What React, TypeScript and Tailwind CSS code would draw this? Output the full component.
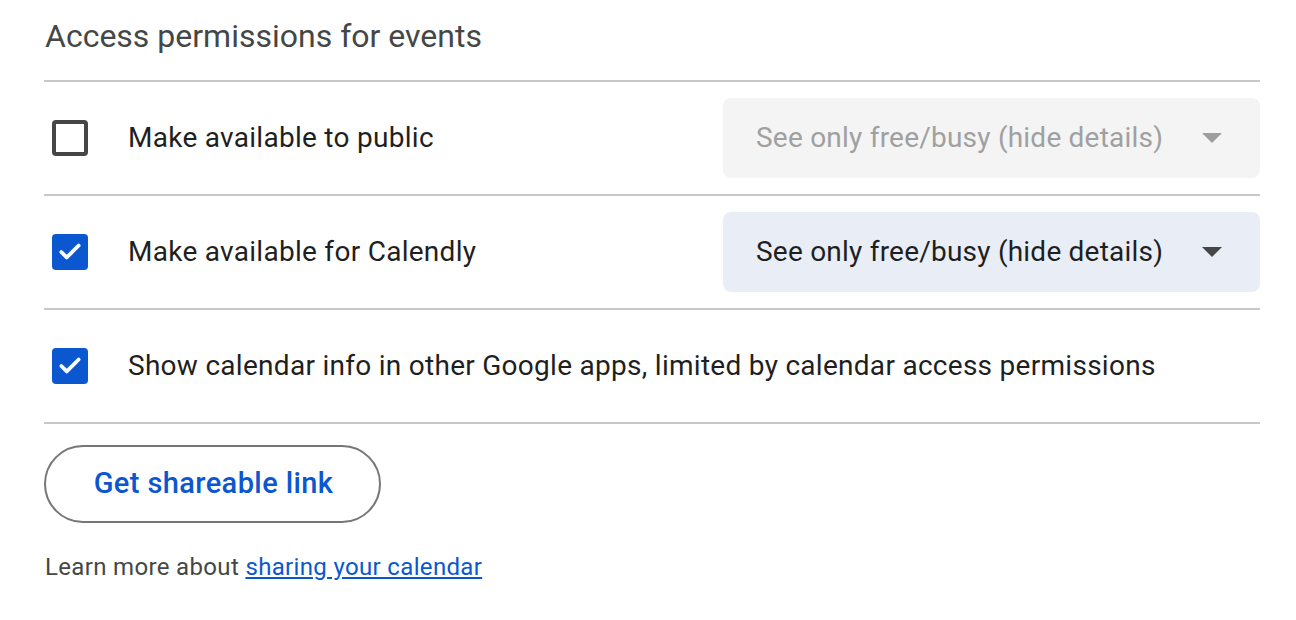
import { Check } from "lucide-react";

function Checkbox({ checked }: { checked: boolean }) {
  return checked ? (
    <div className="flex h-[36px] w-[36px] shrink-0 items-center justify-center rounded-[4px] bg-[#0b57d0]">
      <Check className="h-[26px] w-[26px] text-white" strokeWidth={3.5} />
    </div>
  ) : (
    <div className="h-[36px] w-[36px] shrink-0 rounded-[4px] border-[4px] border-[#444746]" />
  );
}

function Dropdown({ disabled }: { disabled?: boolean }) {
  return (
    <div
      className={
        disabled
          ? "flex h-[80px] w-[537px] items-center justify-between rounded-[8px] bg-[#f4f4f4] pl-[33px] pr-[38px] text-[#a0a0a0]"
          : "flex h-[80px] w-[537px] items-center justify-between rounded-[8px] bg-[#e9eef6] pl-[33px] pr-[38px] text-[#1f1f1f]"
      }
    >
      <span className="text-[28px] tracking-[0.22px]">See only free/busy (hide details)</span>
      <svg width="20" height="10" viewBox="0 0 20 10">
        <path d="M0 0 L20 0 L10 10 Z" fill={disabled ? "#9e9e9e" : "#444746"} />
      </svg>
    </div>
  );
}

function Row({ checked, label, dropdown }: { checked: boolean; label: string; dropdown?: "on" | "off" }) {
  return (
    <div className="flex h-[114px] items-center border-b-2 border-[#c7c7c7] pl-[8px]">
      <Checkbox checked={checked} />
      <span className="ml-[40px] flex-1 text-[28px] tracking-[0.28px] text-[#1f1f1f]">{label}</span>
      {dropdown && <Dropdown disabled={dropdown === "off"} />}
    </div>
  );
}

export default function App() {
  return (
    <div className="h-[620px] w-[1296px] bg-white font-['Roboto',sans-serif]">
      <div className="w-[1260px] pl-[44px]">
        <div className="pt-[16px] pb-[24px] pl-[1px] text-[32px] leading-[40px] text-[#444746]">
          Access permissions for events
        </div>
        <div className="border-t-2 border-[#c7c7c7]">
          <Row checked={false} label="Make available to public" dropdown="off" />
          <Row checked label="Make available for Calendly" dropdown="on" />
          <Row
            checked
            label="Show calendar info in other Google apps, limited by calendar access permissions"
          />
        </div>
        <button className="mt-[21px] flex h-[78px] w-[337px] items-center justify-center rounded-full border-2 border-[#747775] pl-[2px] text-[29px] font-medium tracking-[0.4px] text-[#0b57d0]">
          Get shareable link
        </button>
        <div className="mt-[28px] pl-[1px] text-[24px] leading-[32px] tracking-[0.34px] text-[#444746]">
          Learn more about{" "}
          <a href="#" className="text-[#0b57d0] underline">
            sharing your calendar
          </a>
        </div>
      </div>
    </div>
  );
}
